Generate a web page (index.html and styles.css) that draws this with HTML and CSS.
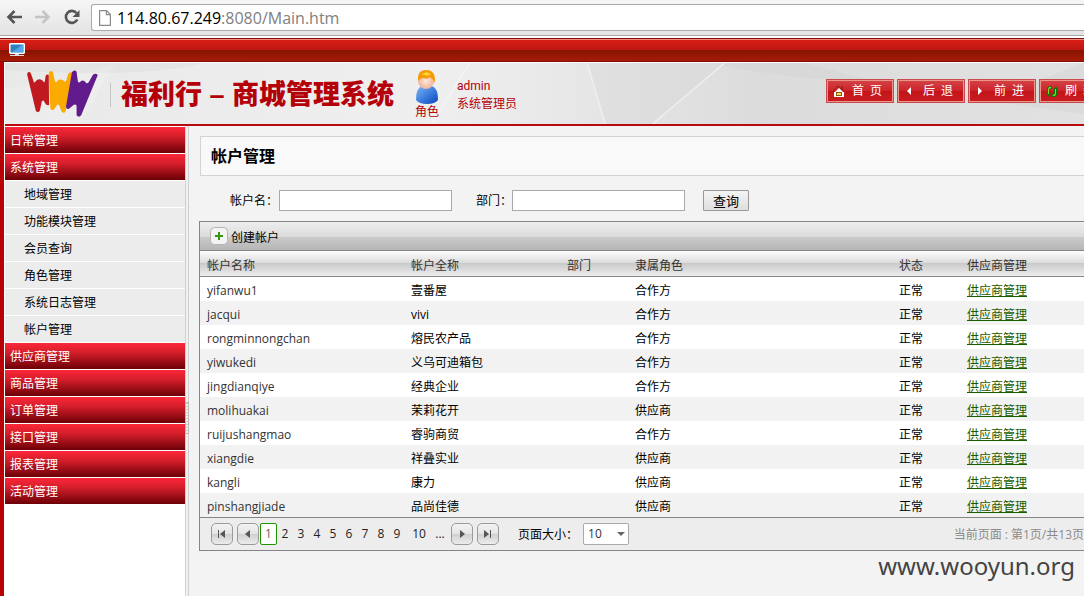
FILE: index.html
```html
<!DOCTYPE html>
<html lang="zh-CN">
<head>
<meta charset="utf-8">
<title>帐户管理</title>
<link rel="stylesheet" href="styles.css">
</head>
<body>
<div class="browser">
  <svg class="nav-icon" viewBox="0 0 16 16" width="16" height="16" fill="none" stroke="#555" stroke-width="2.6"><path d="M8.5 2 2.5 8l6 6M3 8h13"/></svg>
  <svg class="nav-icon" viewBox="0 0 16 16" width="16" height="16" fill="none" stroke="#c4c4c4" stroke-width="2.6"><path d="M7.500 2l6 6-6 6M13 8H0"/></svg>
  <svg class="nav-icon" viewBox="0 0 16 16" width="16" height="16"><path d="M13.300 10.500A6 6 0 1 1 12.500 4" fill="none" stroke="#555" stroke-width="2.600"/><path d="M15.500 1v7h-7z" fill="#555"/></svg>
  <div class="address">
    <svg viewBox="0 0 12 16" width="12" height="16" fill="#fff" stroke="#8a8a8a" stroke-width="1.200"><path d="M.6.6h6.800l4 4v10.800H.6zM7.400.6v4h4"/></svg>
    <span class="url"><b>114.80.67.249</b>:8080/Main.htm</span>
  </div>
</div>
<div class="titlebar">
  <svg viewBox="0 0 16 13" width="16" height="13"><path d="M1 0h14l1 1v9l-1 1H1l-1-1V1z" fill="#fff"/><path d="M1.500 1.500h13v8h-13z" fill="#2b80bd"/><path d="M3 9 13 2h1v7z" fill="#52a8e8"/><path d="M6 11h4v1H6zM1 12h14v1H1z" fill="#ddd"/></svg>
</div>
<div class="app">
  <header class="header">
    <svg class="rays" preserveAspectRatio="none" viewBox="0 0 1080 60"><path d="M0 7Q140 15 200 0H0z" fill="#ddd" opacity=".5"/><path d="M110 0 75 60H0V25Q60 20 110 0z" fill="#fff" opacity=".15"/><path d="M465 0 427 60M583 0l18 60M720 0 648 60" stroke="#f4f4f4" stroke-width="1.500"/><path d="M583 0l18 60h47L720 0z" fill="#d6d6d6" opacity=".4"/><path d="M720 3q80 15 150 15L800 0h-80zM980 37l100 13V0z" fill="#d2d2d2" opacity=".4"/></svg>
    <svg class="logo" viewBox="63 20 219 148" width="73" height="49">
      <path fill="#c11920" d="M66 38Q65 29 72 29 76 29 78 36L86 60Q90 62 92 56 101 46 112 55 117 63 119 58L122 40Q126 34 131 38L132 128Q126 133 119 122 115 110 110 118L104 146Q98 154 92 147z"/>
      <path fill="#fbab00" d="M131 32Q135 22 143 28L150 58Q154 62 157 56 166 48 177 56 181 60 184 54L190 34Q196 27 204 31L182 148Q176 156 170 149L163 130Q158 124 154 132L148 141Q141 148 136 140z"/>
      <path fill="#611b8c" d="M201 30Q208 20 215 28L219 58Q222 64 227 58 235 50 244 62 249 66 253 58L264 38Q272 31 279 38L229 160Q222 168 215 160L215 130Q210 124 204 130L192 140Q184 143 183 133z"/>
    </svg>
    <h1 class="brand">福利行 – 商城管理系统</h1>
    <div class="role">
      <svg viewBox="0 0 26 34" width="26" height="34"><defs><linearGradient id="robe" x1="0" y1="0" x2="1" y2="1"><stop stop-color="#78b8fb"/><stop offset="1" stop-color="#0645bd"/></linearGradient><radialGradient id="face"><stop stop-color="#ffe8dc"/><stop offset="1" stop-color="#eeb39d"/></radialGradient></defs><path d="M2 30q0-12 6-14h10q6 2 6 14-3 4-11 4T2 30z" fill="url(#robe)"/><ellipse cx="12" cy="11" rx="8" ry="8" fill="url(#face)"/><path d="M4 11Q3 0 12 0q10 0 9 13-2-4-5-6-3 3-6 1-4 0-6 3z" fill="#f39a08"/><path d="M7 5q5-5 10-1l-4 2q-3-2-6-1z" fill="#ffd52b"/></svg>
      <span>角色</span>
    </div>
    <div class="user"><span>admin</span><span>系统管理员</span></div>
    <nav class="actions">
      <button type="button"><svg viewBox="0 0 12 13" width="12" height="13"><path d="M1 7h10v5H1z" fill="#fff"/><path d="M0 6 5 1l6 5M9 1v4" fill="none" stroke="#8b1b14"/><path d="M2 7l4-4 4 4z" fill="#fff"/><path d="M3 7h6v4H3z" fill="#8a5a15"/><path d="M4 8h4v2H4z" fill="#ffd64a"/></svg>首 页</button>
      <button type="button"><svg viewBox="0 0 12 13" width="12" height="13"><path d="M7 2v8L3 6z" fill="#fff"/></svg>后 退</button>
      <button type="button"><svg viewBox="0 0 12 13" width="12" height="13"><path d="M3 2v8l4-4z" fill="#fff"/></svg>前 进</button>
      <button type="button"><svg viewBox="0 0 12 13" width="12" height="13"><path d="M6 1v3H4v4h1l-3 4-2-4h1V3l2-2zM6 12V9h2V5H7l3-4 2 4h-1v5l-2 2z" fill="#087908"/><path d="M5 2v1L3 4v5H2V4l1-2zM7 11v-1l2-1V4h1v5l-1 2z" fill="#7be32c"/></svg>刷 新</button>
    </nav>
  </header>
  <div class="body">
    <ul class="menu">
      <li><a class="group" href="#">日常管理</a></li>
      <li><a class="group" href="#">系统管理</a></li>
      <li><a class="item" href="#">地域管理</a></li>
      <li><a class="item" href="#">功能模块管理</a></li>
      <li><a class="item" href="#">会员查询</a></li>
      <li><a class="item" href="#">角色管理</a></li>
      <li><a class="item" href="#">系统日志管理</a></li>
      <li><a class="item" href="#">帐户管理</a></li>
      <li><a class="group" href="#">供应商管理</a></li>
      <li><a class="group" href="#">商品管理</a></li>
      <li><a class="group" href="#">订单管理</a></li>
      <li><a class="group" href="#">接口管理</a></li>
      <li><a class="group" href="#">报表管理</a></li>
      <li><a class="group" href="#">活动管理</a></li>
    </ul>
    <div class="splitter"><div class="grip"></div></div>
    <main class="main">
      <h2 class="page-title">帐户管理</h2>
      <form class="search">
        <label for="account">帐户名：</label><input id="account" type="text">
        <label for="dept">部门：</label><input id="dept" type="text">
        <button type="button">查询</button>
      </form>
      <section class="grid">
        <div class="toolbar"><button type="button"><svg viewBox="0 0 18 18" width="18" height="18"><rect x=".5" y=".5" width="17" height="17" rx="4" fill="#f3f3f3" stroke="#b5b5b5"/><path d="M9 5v8M5 9h8" stroke="#379713" stroke-width="2"/></svg><span>创建帐户</span></button></div>
        <table>
          <colgroup><col class="c-name"><col class="c-full"><col class="c-dept"><col class="c-role"><col class="c-dept"><col></colgroup>
          <thead><tr><th>帐户名称</th><th>帐户全称</th><th>部门</th><th>隶属角色</th><th>状态</th><th>供应商管理</th></tr></thead>
          <tbody>
            <tr><td>yifanwu1</td><td>壹番屋</td><td></td><td>合作方</td><td>正常</td><td><a href="#">供应商管理</a></td></tr>
            <tr><td>jacqui</td><td>vivi</td><td></td><td>合作方</td><td>正常</td><td><a href="#">供应商管理</a></td></tr>
            <tr><td>rongminnongchan</td><td>熔民农产品</td><td></td><td>合作方</td><td>正常</td><td><a href="#">供应商管理</a></td></tr>
            <tr><td>yiwukedi</td><td>义乌可迪箱包</td><td></td><td>合作方</td><td>正常</td><td><a href="#">供应商管理</a></td></tr>
            <tr><td>jingdianqiye</td><td>经典企业</td><td></td><td>合作方</td><td>正常</td><td><a href="#">供应商管理</a></td></tr>
            <tr><td>molihuakai</td><td>茉莉花开</td><td></td><td>供应商</td><td>正常</td><td><a href="#">供应商管理</a></td></tr>
            <tr><td>ruijushangmao</td><td>睿驹商贸</td><td></td><td>合作方</td><td>正常</td><td><a href="#">供应商管理</a></td></tr>
            <tr><td>xiangdie</td><td>祥叠实业</td><td></td><td>供应商</td><td>正常</td><td><a href="#">供应商管理</a></td></tr>
            <tr><td>kangli</td><td>康力</td><td></td><td>供应商</td><td>正常</td><td><a href="#">供应商管理</a></td></tr>
            <tr><td>pinshangjiade</td><td>品尚佳德</td><td></td><td>供应商</td><td>正常</td><td><a href="#">供应商管理</a></td></tr>
          </tbody>
        </table>
        <div class="pager">
          <div class="steps">
            <button type="button" aria-label="首页"><svg viewBox="0 0 10 10" width="10" height="10" fill="#555"><path d="M1 1h1v8H1zM8 1v8L3 5z"/></svg></button>
            <button type="button" aria-label="上一页"><svg viewBox="0 0 10 10" width="10" height="10" fill="#555"><path d="M7 1v8L2 5z"/></svg></button>
          </div>
          <div class="pages">
            <a class="current" href="#">1</a><a href="#">2</a><a href="#">3</a><a href="#">4</a><a href="#">5</a><a href="#">6</a><a href="#">7</a><a href="#">8</a><a href="#">9</a><a class="wide" href="#">10</a><a href="#">...</a>
          </div>
          <div class="steps">
            <button type="button" aria-label="下一页"><svg viewBox="0 0 10 10" width="10" height="10" fill="#555"><path d="M3 1v8l5-4z"/></svg></button>
            <button type="button" aria-label="末页"><svg viewBox="0 0 10 10" width="10" height="10" fill="#555"><path d="M1 1v8l5-4zM7 1h1v8H7z"/></svg></button>
          </div>
          <label class="size-label" for="size">页面大小：</label>
          <div class="size"><select id="size"><option>10</option><option>20</option></select></div>
          <span class="status">当前页面 : 第1页/共13页</span>
        </div>
      </section>
      <div class="watermark">www.wooyun.org</div>
    </main>
  </div>
</div>
</body>
</html>
```
FILE: styles.css
```css
* { box-sizing: border-box; }
html, body { height: 100%; }
body {
  margin: 0;
  display: flex;
  flex-direction: column;
  overflow: hidden;
  background: #fff;
  color: #000;
  font: 12px/18px "Open Sans", "Noto Sans CJK SC", sans-serif;
}
button, input, select { font: inherit; color: inherit; margin: 0; }
button { cursor: pointer; white-space: nowrap; }
a { color: inherit; text-decoration: none; }
svg { display: block; flex: none; }

.browser {
  flex: none;
  height: 36px;
  display: flex;
  align-items: center;
  gap: 13px;
  padding: 0 0 2px 6px;
  background: linear-gradient(#f6f6f6, #e3e3e3);
  border-bottom: 1px solid #a9a9a9;
}
.address {
  flex: 1;
  height: 27px;
  margin-left: -2px;
  margin-top: 2px;
  display: flex;
  align-items: center;
  gap: 6px;
  padding-left: 7px;
  background: #fff;
  border: 1px solid #aaa;
  border-right: 0;
  border-radius: 3px 0 0 3px;
}
.url { font-size: 16px; color: #808080; }
.url b { font-weight: 400; color: #000; }

.titlebar {
  flex: none;
  height: 24px;
  margin-top: 2px;
  padding: 4px 9px;
  border: 1px solid #7c1008;
  border-width: 1px 0;
  background: linear-gradient(#f08c80 1px, #d91d16 1px, #bb1710 50%, #861400 50%, #a61b08);
}

.app {
  flex: 1;
  min-height: 0;
  display: flex;
  flex-direction: column;
  border-left: 4px solid #b90005;
  padding: 1px 0 0 1px;
}
.header {
  position: relative;
  flex: none;
  height: 63px;
  display: flex;
  align-items: center;
  padding: 0 0 1px 21px;
  overflow: hidden;
  background: linear-gradient(90deg, #e9e9e9, #efefef 40%, #dcdcdc 70%, #e1e1e1);
  border-bottom: 2px solid #b90b0f;
  color: #b40008;
}
.rays { position: absolute; inset: 0; width: 100%; height: 100%; fill: none; }
.header > :not(.rays) { position: relative; flex: none; }
.brand {
  margin: 4px 0 0 11px;
  padding-left: 10px;
  border-left: 1px solid #c6c6c6;
  font: 900 27px/24px "Liberation Sans", "Noto Sans CJK SC", sans-serif;
  white-space: nowrap;
}
.role { margin-left: 20px; display: flex; flex-direction: column; align-items: center; line-height: 16px; padding-top: 4px; }
.user { display: flex; flex-direction: column; margin-left: 17px; padding-top: 4px; font-family: Roboto, "Noto Sans CJK SC", sans-serif; }
.actions { display: flex; gap: 3px; margin-left: auto; margin-right: -23px; padding-bottom: 4px; }
.actions button {
  width: 68px;
  height: 24px;
  display: flex;
  align-items: center;
  gap: 7px;
  padding: 0 6px;
  border: 1px solid #c94a4e;
  box-shadow: inset 0 0 0 1px #ec9689;
  background: linear-gradient(#d54347, #cb2429 50%, #c4141a 50%, #c91d22);
  color: #fff;
  word-spacing: 3px;
}

.body { flex: 1; min-height: 0; display: flex; }
.menu { flex: none; width: 180px; margin: 0; padding: 1px 0 0; list-style: none; background: #fff; }
.menu a { display: block; height: 26px; margin-bottom: 1px; line-height: 28px; }
.menu .group { padding-left: 5px; color: #fff; background: linear-gradient(#fa2738, #d81f2c 35%, #6c0006); }
.menu .item { padding-left: 19px; background: #ececec; }
.splitter { flex: none; width: 4px; background: #f1f1f1; border: 1px solid #d0d0d0; border-width: 0 1px; display: flex; flex-direction: column; }
.grip { height: 32px; margin: 276px -1px 0; border: 1px solid #bbb; background: repeating-linear-gradient(#ccc 0 1px, #f4f4f4 1px 3px); }

.main { flex: 1; min-width: 0; padding: 10px 0 0 10px; overflow: hidden; background: #f3f3f3; }
.page-title {
  height: 40px;
  margin: 0 0 0 1px;
  padding-left: 10px;
  border: 1px solid #d3d3d3;
  border-right: 0;
  background: #f9f9f9;
  font-size: 16px;
  line-height: 38px;
}
.search { display: flex; align-items: center; height: 45px; padding: 4px 0 0 31px; }
.search label { white-space: nowrap; padding-top: 1px; }
.search input { width: 173px; height: 21px; margin: 0 24px 0 1px; padding: 0 4px; border: 1px solid #a9a9a9; background: #fff; }
.search label + #dept { margin: 0 18px 0 0; }
.search button { width: 46px; height: 21px; padding: 0; border: 1px solid #999; border-radius: 1px; background: linear-gradient(#f5f5f5, #dedede); font-size: 13px; line-height: 16px; }

.grid { border: 1px solid #858585; border-right: 0; background: #ededed; }
.toolbar { height: 29px; display: flex; align-items: center; padding-left: 10px; border-bottom: 1px solid #858585; background: linear-gradient(#eee, #dadada 55%, #cacaca 55%, #b6b6b6); }
.toolbar button { display: flex; align-items: center; gap: 3px; padding: 0; border: 0; background: none; }
.toolbar span { padding-top: 4px; }
table { width: 100%; table-layout: fixed; border-collapse: separate; border-spacing: 0; background: #fff; }
.c-name { width: 204px; }
.c-full { width: 156px; }
.c-dept { width: 68px; }
.c-role { width: 264px; }
th, td { height: 24px; padding: 4px 0 0 7px; text-align: left; white-space: nowrap; }
th { height: 26px; font-weight: 400; color: #333; border-bottom: 1px solid #858585; }
thead tr { background: linear-gradient(#fff, #dcdcdc 45%, #c8c8c8 45%, #f0f0f0); }
tbody tr:nth-child(even) { background: #f2f2f2; }
td:first-child { color: #333; }
td a { color: #185c00; text-decoration: underline; }

.pager { height: 33px; display: flex; align-items: center; padding-left: 11px; border-top: 1px solid #858585; }
.steps { flex: none; display: flex; gap: 4px; }
.steps button { width: 22px; height: 22px; display: grid; place-items: center; padding: 0; border: 1px solid #9b9b9b; border-radius: 5px; background: linear-gradient(#f3f3f3, #e4e4e4 50%, #cfcfcf 50%, #ececec); }
.pages { flex: none; display: flex; align-items: center; margin: 0 3px 0 1px; color: #222; }
.pages a { width: 16px; text-align: center; line-height: 20px; }
.pages .current { width: 17px; height: 22px; border: 1px solid #229300; border-radius: 2px; background: #fff; color: #666; }
.pages .wide { width: 26px; margin-left: 1px; }
.size-label { flex: none; margin-left: 19px; padding-top: 2px; }
.size { position: relative; flex: none; margin-left: 5px; }
.size select { display: block; width: 46px; height: 22px; padding: 0 4px; appearance: none; border: 1px solid #aaa; border-radius: 2px; background: #fff; color: #333; }
.size::after { content: ""; position: absolute; right: 4px; top: 9px; border: 4px solid transparent; border-top-color: #666; border-bottom: 0; pointer-events: none; }
.status { flex: none; margin-left: auto; padding-top: 2px; color: #8b8b8b; }
.watermark { padding: 0 9px 0 0; text-align: right; color: #444; font: 24px/30px "Noto Sans", sans-serif; }
```
